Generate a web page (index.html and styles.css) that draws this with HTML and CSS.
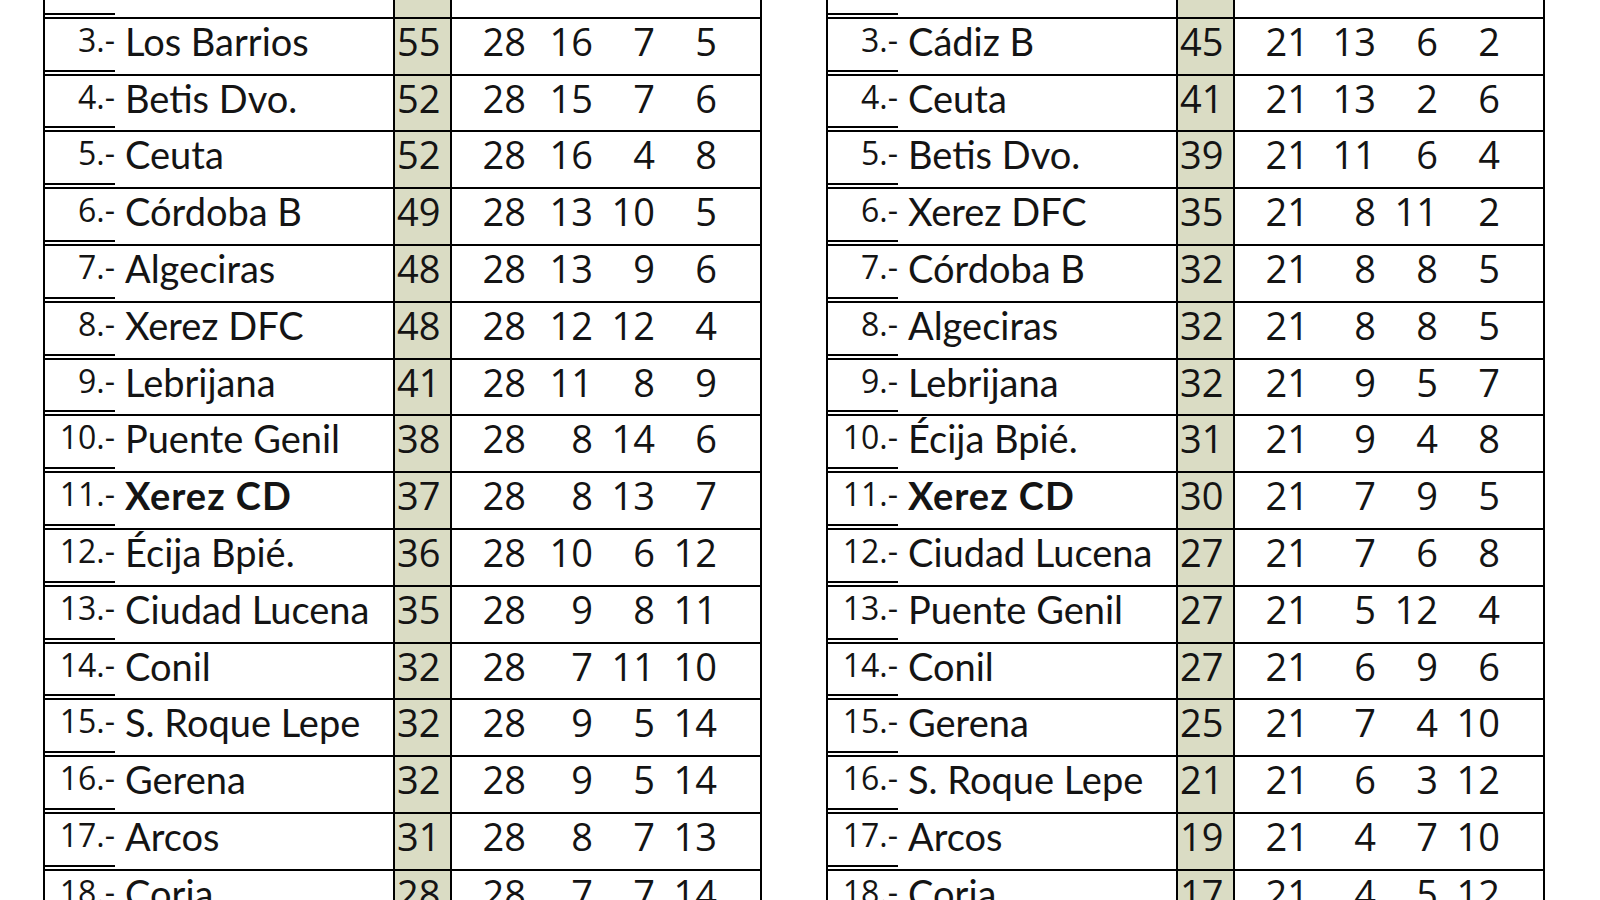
FILE: index.html
```html
<!DOCTYPE html>
<html lang="es">
<head>
<meta charset="utf-8">
<title>Clasificación</title>
<link rel="stylesheet" href="styles.css">
</head>
<body>
<div class="page">
  <div class="table">
    <div class="row"><div class="rank"></div><div class="name"></div><div class="pts"></div><div class="n"></div><div class="n"></div><div class="n"></div><div class="n"></div><div></div></div>
    <div class="row"><div class="rank">3.-</div><div class="name">Los Barrios</div><div class="pts">55</div><div class="n">28</div><div class="n">16</div><div class="n">7</div><div class="n">5</div><div></div></div>
    <div class="row"><div class="rank">4.-</div><div class="name">Betis Dvo.</div><div class="pts">52</div><div class="n">28</div><div class="n">15</div><div class="n">7</div><div class="n">6</div><div></div></div>
    <div class="row"><div class="rank">5.-</div><div class="name">Ceuta</div><div class="pts">52</div><div class="n">28</div><div class="n">16</div><div class="n">4</div><div class="n">8</div><div></div></div>
    <div class="row"><div class="rank">6.-</div><div class="name">Córdoba B</div><div class="pts">49</div><div class="n">28</div><div class="n">13</div><div class="n">10</div><div class="n">5</div><div></div></div>
    <div class="row"><div class="rank">7.-</div><div class="name">Algeciras</div><div class="pts">48</div><div class="n">28</div><div class="n">13</div><div class="n">9</div><div class="n">6</div><div></div></div>
    <div class="row"><div class="rank">8.-</div><div class="name">Xerez DFC</div><div class="pts">48</div><div class="n">28</div><div class="n">12</div><div class="n">12</div><div class="n">4</div><div></div></div>
    <div class="row"><div class="rank">9.-</div><div class="name">Lebrijana</div><div class="pts">41</div><div class="n">28</div><div class="n">11</div><div class="n">8</div><div class="n">9</div><div></div></div>
    <div class="row"><div class="rank">10.-</div><div class="name">Puente Genil</div><div class="pts">38</div><div class="n">28</div><div class="n">8</div><div class="n">14</div><div class="n">6</div><div></div></div>
    <div class="row"><div class="rank">11.-</div><div class="name bold">Xerez CD</div><div class="pts">37</div><div class="n">28</div><div class="n">8</div><div class="n">13</div><div class="n">7</div><div></div></div>
    <div class="row"><div class="rank">12.-</div><div class="name">Écija Bpié.</div><div class="pts">36</div><div class="n">28</div><div class="n">10</div><div class="n">6</div><div class="n">12</div><div></div></div>
    <div class="row"><div class="rank">13.-</div><div class="name">Ciudad Lucena</div><div class="pts">35</div><div class="n">28</div><div class="n">9</div><div class="n">8</div><div class="n">11</div><div></div></div>
    <div class="row"><div class="rank">14.-</div><div class="name">Conil</div><div class="pts">32</div><div class="n">28</div><div class="n">7</div><div class="n">11</div><div class="n">10</div><div></div></div>
    <div class="row"><div class="rank">15.-</div><div class="name">S. Roque Lepe</div><div class="pts">32</div><div class="n">28</div><div class="n">9</div><div class="n">5</div><div class="n">14</div><div></div></div>
    <div class="row"><div class="rank">16.-</div><div class="name">Gerena</div><div class="pts">32</div><div class="n">28</div><div class="n">9</div><div class="n">5</div><div class="n">14</div><div></div></div>
    <div class="row"><div class="rank">17.-</div><div class="name">Arcos</div><div class="pts">31</div><div class="n">28</div><div class="n">8</div><div class="n">7</div><div class="n">13</div><div></div></div>
    <div class="row"><div class="rank">18.-</div><div class="name">Coria</div><div class="pts">28</div><div class="n">28</div><div class="n">7</div><div class="n">7</div><div class="n">14</div><div></div></div>
  </div>
  <div class="table">
    <div class="row"><div class="rank"></div><div class="name"></div><div class="pts"></div><div class="n"></div><div class="n"></div><div class="n"></div><div class="n"></div><div></div></div>
    <div class="row"><div class="rank">3.-</div><div class="name">Cádiz B</div><div class="pts">45</div><div class="n">21</div><div class="n">13</div><div class="n">6</div><div class="n">2</div><div></div></div>
    <div class="row"><div class="rank">4.-</div><div class="name">Ceuta</div><div class="pts">41</div><div class="n">21</div><div class="n">13</div><div class="n">2</div><div class="n">6</div><div></div></div>
    <div class="row"><div class="rank">5.-</div><div class="name">Betis Dvo.</div><div class="pts">39</div><div class="n">21</div><div class="n">11</div><div class="n">6</div><div class="n">4</div><div></div></div>
    <div class="row"><div class="rank">6.-</div><div class="name">Xerez DFC</div><div class="pts">35</div><div class="n">21</div><div class="n">8</div><div class="n">11</div><div class="n">2</div><div></div></div>
    <div class="row"><div class="rank">7.-</div><div class="name">Córdoba B</div><div class="pts">32</div><div class="n">21</div><div class="n">8</div><div class="n">8</div><div class="n">5</div><div></div></div>
    <div class="row"><div class="rank">8.-</div><div class="name">Algeciras</div><div class="pts">32</div><div class="n">21</div><div class="n">8</div><div class="n">8</div><div class="n">5</div><div></div></div>
    <div class="row"><div class="rank">9.-</div><div class="name">Lebrijana</div><div class="pts">32</div><div class="n">21</div><div class="n">9</div><div class="n">5</div><div class="n">7</div><div></div></div>
    <div class="row"><div class="rank">10.-</div><div class="name">Écija Bpié.</div><div class="pts">31</div><div class="n">21</div><div class="n">9</div><div class="n">4</div><div class="n">8</div><div></div></div>
    <div class="row"><div class="rank">11.-</div><div class="name bold">Xerez CD</div><div class="pts">30</div><div class="n">21</div><div class="n">7</div><div class="n">9</div><div class="n">5</div><div></div></div>
    <div class="row"><div class="rank">12.-</div><div class="name">Ciudad Lucena</div><div class="pts">27</div><div class="n">21</div><div class="n">7</div><div class="n">6</div><div class="n">8</div><div></div></div>
    <div class="row"><div class="rank">13.-</div><div class="name">Puente Genil</div><div class="pts">27</div><div class="n">21</div><div class="n">5</div><div class="n">12</div><div class="n">4</div><div></div></div>
    <div class="row"><div class="rank">14.-</div><div class="name">Conil</div><div class="pts">27</div><div class="n">21</div><div class="n">6</div><div class="n">9</div><div class="n">6</div><div></div></div>
    <div class="row"><div class="rank">15.-</div><div class="name">Gerena</div><div class="pts">25</div><div class="n">21</div><div class="n">7</div><div class="n">4</div><div class="n">10</div><div></div></div>
    <div class="row"><div class="rank">16.-</div><div class="name">S. Roque Lepe</div><div class="pts">21</div><div class="n">21</div><div class="n">6</div><div class="n">3</div><div class="n">12</div><div></div></div>
    <div class="row"><div class="rank">17.-</div><div class="name">Arcos</div><div class="pts">19</div><div class="n">21</div><div class="n">4</div><div class="n">7</div><div class="n">10</div><div></div></div>
    <div class="row"><div class="rank">18.-</div><div class="name">Coria</div><div class="pts">17</div><div class="n">21</div><div class="n">4</div><div class="n">5</div><div class="n">12</div><div></div></div>
  </div>
</div>
</body>
</html>
```

FILE: styles.css
```css
html, body {
  margin: 0;
  padding: 0;
  background: #ffffff;
  overflow: hidden;
}

body {
  font-family: "Open Sans", "Noto Sans", sans-serif;
  font-weight: 400;
  color: #141414;
}

.page {
  display: flex;
  gap: 64px;
  padding-left: 43px;
  margin-top: -40px;
}

.table {
  width: 719px;
  box-sizing: border-box;
  border-left: 2px solid #000;
  border-right: 2px solid #000;
}

.row {
  display: grid;
  grid-template-columns: 70px 278px 59px 74px 67px 62px 62px 1fr;
  height: 56.8px;
  box-sizing: border-box;
  border-top: 2px solid #000;
  font-size: 38px;
  line-height: 45px;
  white-space: nowrap;
}

.rank {
  font-size: 32px;
  line-height: 41px;
  text-align: right;
  border-bottom: 2px solid #000;
  margin-bottom: 2px;
}

.name {
  padding-left: 10px;
  font-family: Lato, "Open Sans", sans-serif;
}

.bold {
  font-weight: 700;
  letter-spacing: 1px;
}

.pts {
  box-sizing: border-box;
  border-left: 2px solid #000;
  border-right: 2px solid #000;
  background: #dadcc4;
  padding-left: 2px;
}

.n {
  text-align: right;
}
```
